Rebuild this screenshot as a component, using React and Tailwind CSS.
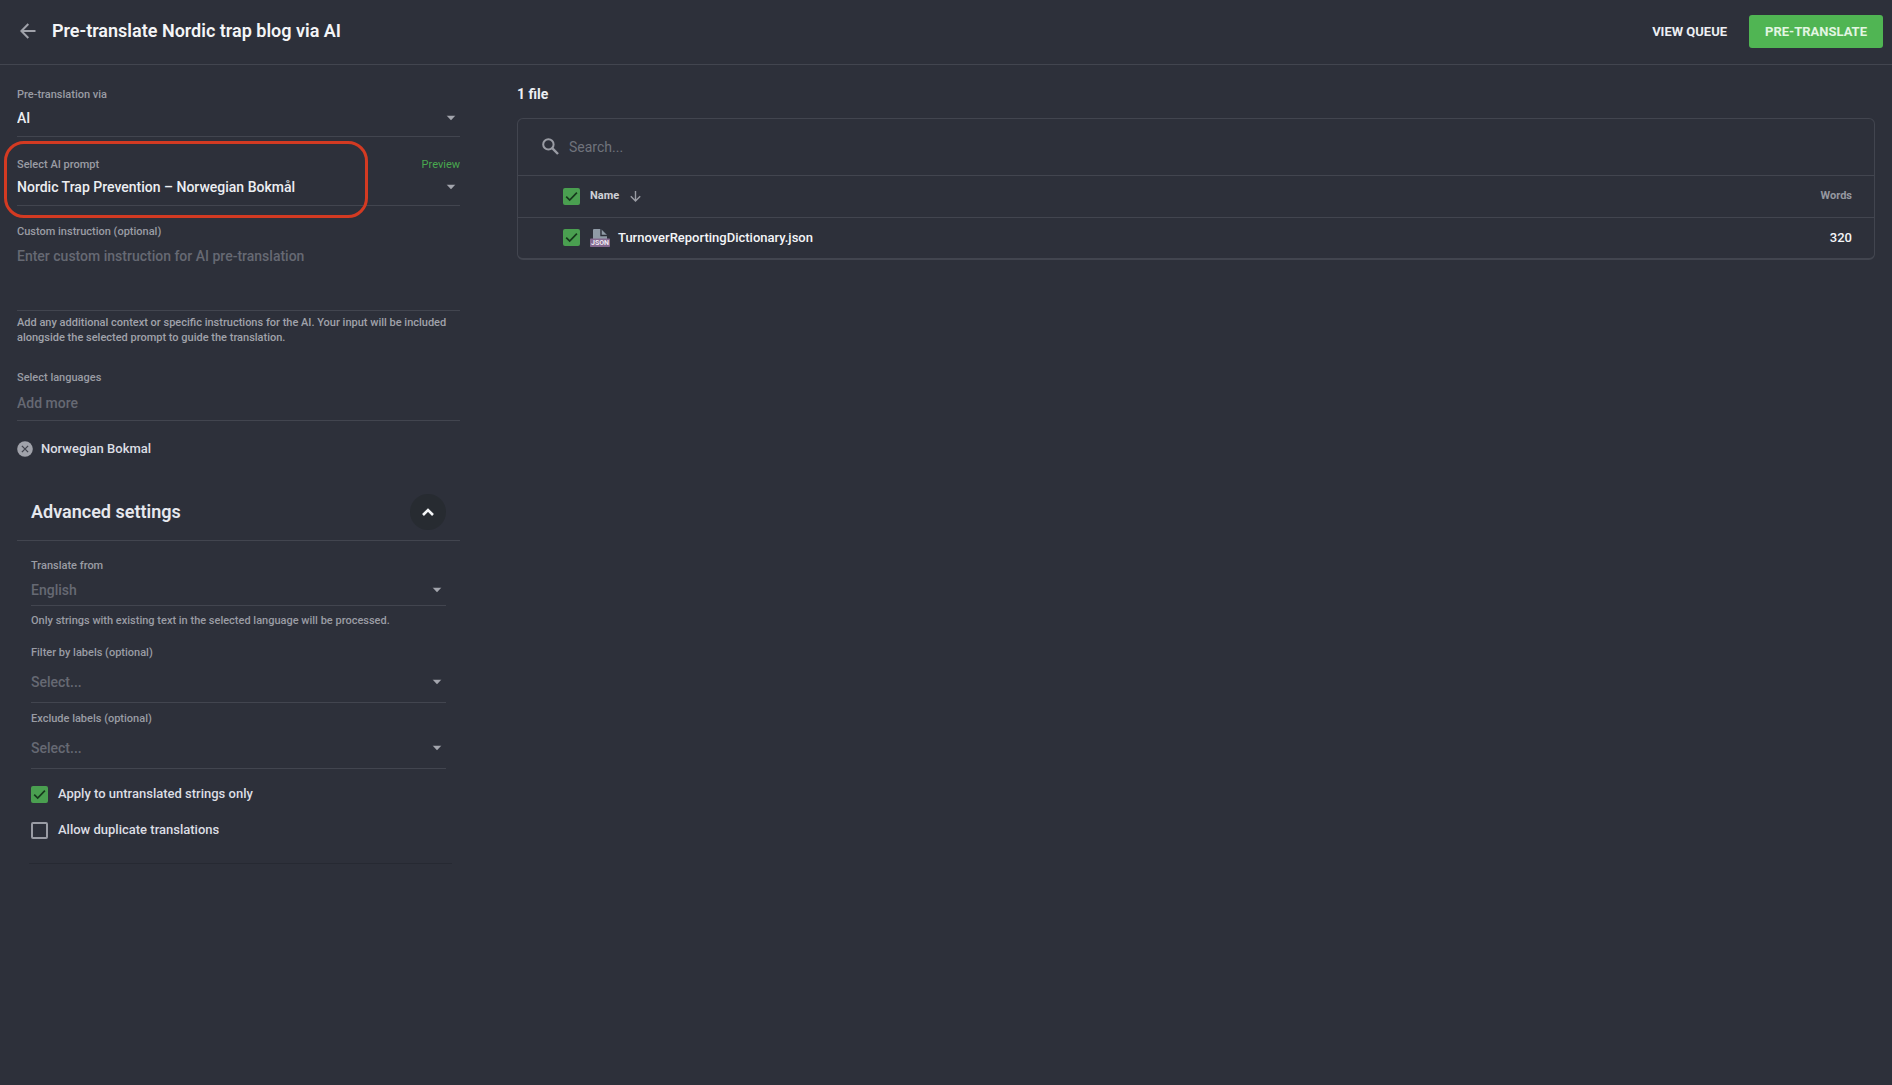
import React from "react";

const LABEL = "block text-[11px] leading-4 font-medium text-[#9a9ca4]";

function Arrow() {
  return (
    <svg
      viewBox="0 0 10 5"
      className="pointer-events-none absolute right-1 top-1/2 h-[5px] w-[10px] -translate-y-1/2 text-[#a3a5ad]"
      aria-hidden="true"
    >
      <path d="M0.5 0h9L5 4.8z" fill="currentColor" />
    </svg>
  );
}

function Select({ id, className, options }) {
  return (
    <div className="relative">
      <select
        id={id}
        className={
          "block w-full appearance-none bg-transparent pr-6 text-sm font-medium outline-none " + className
        }
      >
        {options.map((o) => (
          <option key={o}>{o}</option>
        ))}
      </select>
      <Arrow />
    </div>
  );
}

function Check({ id, checked, label }) {
  return (
    <span className="relative block size-[17px] shrink-0">
      <input
        id={id}
        type="checkbox"
        defaultChecked={checked}
        aria-label={label}
        className="peer block size-[17px] appearance-none rounded-xs border-2 border-[#9a9ca4] checked:border-[#4a9f50] checked:bg-[#4a9f50]"
      />
      <svg
        viewBox="0 0 17 17"
        className="pointer-events-none absolute inset-0 hidden size-[17px] peer-checked:block"
        aria-hidden="true"
      >
        <path d="M3.2 8.6l3.5 3.5 7.2-7.4" fill="none" stroke="#17391d" strokeWidth="1.7" />
      </svg>
    </span>
  );
}

function JsonIcon() {
  return (
    <svg viewBox="0 0 20 18" className="h-[18px] w-5 shrink-0" aria-hidden="true">
      <path d="M3 1q0-1 1-1h7l6 6v4H3z" fill="#8f9aa6" />
      <path d="M11 0v6.5h6" fill="none" stroke="#2d303a" strokeWidth="1.4" />
      <rect y="9.5" width="20" height="8.5" rx="0.8" fill="#84698f" />
      <text
        x="10"
        y="16.4"
        textAnchor="middle"
        fontSize="7"
        fontWeight="700"
        fontFamily="Roboto, sans-serif"
        fill="#eee8f1"
      >
        JSON
      </text>
    </svg>
  );
}

function Header() {
  return (
    <header className="flex h-[65px] items-center border-b border-[#42454f] pr-[9px] pl-5">
      <button type="button" aria-label="Back" className="mr-4 mb-0.5 text-[#a0a2aa]">
        <svg viewBox="0 0 16 16" className="size-4" aria-hidden="true">
          <path d="M15.5 8H2M8.3 1L1.4 8l6.9 7" fill="none" stroke="currentColor" strokeWidth="2" />
        </svg>
      </button>
      <h1 className="mb-0.5 text-lg font-semibold text-[#f4f5f7]">Pre-translate Nordic trap blog via AI</h1>
      <a href="#queue" className="mr-[22px] ml-auto text-[13px] font-bold text-[#eceef2]">
        VIEW QUEUE
      </a>
      <button
        type="button"
        className="mb-px h-[33px] rounded-[3px] bg-[#50b553] px-4 text-[13px] font-bold text-[#e2f6e2]"
      >
        PRE-TRANSLATE
      </button>
    </header>
  );
}

function Settings() {
  return (
    <form className="w-[443px] shrink-0 pt-[22px]">
      <div className="border-b border-[#42454f] pb-1">
        <label htmlFor="via" className={LABEL}>
          Pre-translation via
        </label>
        <Select id="via" className="h-[29px] text-[#eceef2]" options={["AI"]} />
      </div>

      <div className="relative mt-5 border-b border-[#42454f] pb-1">
        <div className="flex justify-between">
          <label htmlFor="prompt" className={LABEL}>
            Select AI prompt
          </label>
          <a href="#preview" className="text-[11px] leading-4 text-[#49a84f]">
            Preview
          </a>
        </div>
        <Select id="prompt" className="h-7 text-[#eceef2]" options={["Nordic Trap Prevention – Norwegian Bokmål"]} />
        <div className="pointer-events-none absolute -top-4 -left-[13px] h-[77px] w-[364px] rounded-[20px] border-3 border-[#d33a22]" />
      </div>

      <div className="mt-[18px]">
        <label htmlFor="custom" className={LABEL}>
          Custom instruction (optional)
        </label>
        <textarea
          id="custom"
          placeholder="Enter custom instruction for AI pre-translation"
          className="block h-[71px] w-full resize-none border-b border-[#42454f] pt-1.5 text-sm font-medium text-[#eceef2] outline-none placeholder:text-[#666973]"
        />
        <p className="pt-1 text-[11px] leading-[15px] font-medium text-[#a0a2aa]">
          Add any additional context or specific instructions for the AI. Your input will be included alongside the
          selected prompt to guide the translation.
        </p>
      </div>

      <div className="mt-[25px]">
        <label htmlFor="langs" className={LABEL}>
          Select languages
        </label>
        <input
          id="langs"
          placeholder="Add more"
          className="block h-[35px] w-full border-b border-[#42454f] text-sm font-medium text-[#eceef2] outline-none placeholder:text-[#666973]"
        />
      </div>

      <div className="mt-[18px] flex h-5 items-center gap-2 text-[13px] font-medium text-[#dcdee4]">
        <button type="button" aria-label="Remove Norwegian Bokmal">
          <svg viewBox="0 0 16 16" className="size-4" aria-hidden="true">
            <circle cx="8" cy="8" r="7.8" fill="#a0a2aa" />
            <path d="M4.9 4.9l6.2 6.2M11.1 4.9l-6.2 6.2" stroke="#40434d" strokeWidth="1.3" />
          </svg>
        </button>
        Norwegian Bokmal
      </div>

      <div className="mt-6 flex h-[58px] items-center justify-between border-b border-[#42454f] px-[14px]">
        <h2 className="text-lg font-semibold text-[#e6e8ee]">Advanced settings</h2>
        <button
          type="button"
          aria-label="Collapse advanced settings"
          className="flex size-9 items-center justify-center rounded-full bg-[#272b31]"
        >
          <svg viewBox="0 0 12 8" className="h-2 w-3" aria-hidden="true">
            <path d="M1 7l5-5 5 5" fill="none" stroke="#f4f5f7" strokeWidth="2.6" />
          </svg>
        </button>
      </div>

      <div className="px-[14px] pt-[17px]">
        <label htmlFor="from" className={LABEL}>
          Translate from
        </label>
        <Select id="from" className="h-8 border-b border-[#42454f] text-[#666973]" options={["English"]} />
        <p className="mt-[7px] text-[11px] leading-4 font-medium text-[#9a9ca4]">
          Only strings with existing text in the selected language will be processed.
        </p>
        <label htmlFor="filter" className={LABEL + " mt-4"}>
          Filter by labels (optional)
        </label>
        <Select id="filter" className="h-[42px] border-b border-[#42454f] text-[#666973]" options={["Select..."]} />
        <label htmlFor="exclude" className={LABEL + " mt-2"}>
          Exclude labels (optional)
        </label>
        <Select id="exclude" className="h-[42px] border-b border-[#42454f] text-[#666973]" options={["Select..."]} />
        <div className="mt-[13px] flex flex-col gap-3 text-[13px] font-medium text-[#dcdee4]">
          <div className="flex h-6 items-center gap-[10px]">
            <Check id="untranslated" checked />
            <label htmlFor="untranslated">Apply to untranslated strings only</label>
          </div>
          <div className="flex h-6 items-center gap-[10px]">
            <Check id="duplicates" />
            <label htmlFor="duplicates">Allow duplicate translations</label>
          </div>
        </div>
      </div>
      <hr className="mr-2 ml-3 mt-[21px] border-[#262932]" />
    </form>
  );
}

function Files() {
  return (
    <section className="min-w-0 flex-1 pt-[19px]">
      <h2 className="text-sm leading-5 font-bold text-[#eceef2]">1 file</h2>
      <div className="mt-[14px] rounded-md border border-b-2 border-[#42454f]">
        <div className="flex h-14 items-center gap-[10px] pl-6">
          <svg viewBox="0 0 17 17" className="mb-0.5 size-[17px] text-[#9a9ca4]" aria-hidden="true">
            <circle cx="6.4" cy="6.4" r="5.2" fill="none" stroke="currentColor" strokeWidth="2" />
            <path d="M10.2 10.2l5.8 5.8" stroke="currentColor" strokeWidth="2.4" />
          </svg>
          <input
            type="search"
            aria-label="Search files"
            placeholder="Search..."
            className="h-10 flex-1 text-sm text-[#eceef2] outline-none placeholder:text-[#70737c]"
          />
        </div>
        <table className="w-full">
          <thead>
            <tr className="h-[42px] border-t border-[#42454f] text-[11px]">
              <th className="w-[72px] py-0 pl-[45px]">
                <Check label="Select all files" checked />
              </th>
              <th className="py-0 text-left font-bold text-[#cfd1d7]" aria-sort="ascending">
                <button type="button" className="flex items-center gap-[11px]">
                  Name
                  <svg viewBox="0 0 11 11" className="size-[11px] text-[#9a9ca4]" aria-hidden="true">
                    <path d="M5.5 0v10M0.8 5.3l4.7 4.7 4.7-4.7" fill="none" stroke="currentColor" strokeWidth="1.4" />
                  </svg>
                </button>
              </th>
              <th className="py-0 pr-[22px] text-right font-bold text-[#9698a0]">Words</th>
            </tr>
          </thead>
          <tbody>
            <tr className="h-10 border-t border-[#42454f] text-[13px] font-medium text-[#f4f5f7]">
              <td className="py-0 pl-[45px]">
                <Check label="Select TurnoverReportingDictionary.json" checked />
              </td>
              <td className="py-0">
                <div className="flex items-center gap-2">
                  <JsonIcon />
                  TurnoverReportingDictionary.json
                </div>
              </td>
              <td className="py-0 pr-[22px] text-right">320</td>
            </tr>
          </tbody>
        </table>
      </div>
    </section>
  );
}

export default function App() {
  return (
    <div className="min-h-screen bg-[#2d303a] font-[Roboto,sans-serif]">
      <Header />
      <main className="flex gap-[57px] px-[17px]">
        <Settings />
        <Files />
      </main>
    </div>
  );
}
